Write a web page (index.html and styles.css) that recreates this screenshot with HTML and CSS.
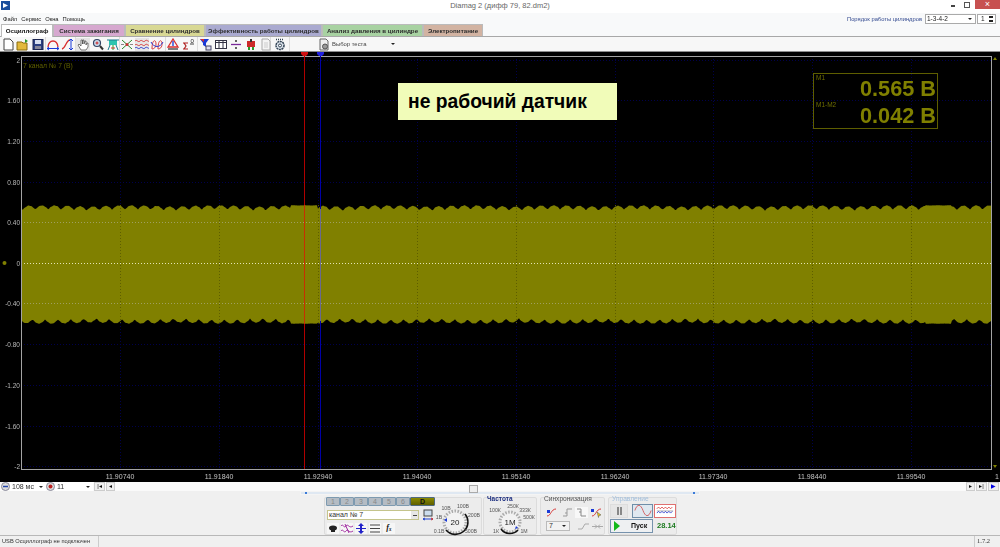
FILE: index.html
```html
<!DOCTYPE html>
<html lang="ru">
<head>
    <meta charset="UTF-8">
    <title>Diamag 2 (дифф 79, 82.dm2)</title>
    <link rel="stylesheet" href="styles.css">
</head>
<body>
    <div class="app">
        <div class="titlebar">
            <svg class="appicon" width="9" height="9" viewBox="0 0 9 9"><rect width="9" height="9" fill="#1c4f9c"/><path d="M2 2l5 2.500-5 2.500z" fill="#fff"/></svg>
            <span class="wintitle">Diamag 2 (дифф 79, 82.dm2)</span>
            <div class="winbtns">
                <span class="winmin"></span>
                <span class="winrestore"></span>
                <span class="winclose">×</span>
            </div>
        </div>

        <div class="menubar">
            <span>Файл</span><span>Сервис</span><span>Окна</span><span>Помощь</span>
            <div class="cyl-order">
                <label>Порядок работы цилиндров</label>
                <div class="combo order-combo">1-3-4-2<i class="drop"></i></div>
                <div class="combo spin">1<i class="updown"></i></div>
            </div>
        </div>

        <div class="tabs">
            <div class="tab active">Осциллограф</div>
            <div class="tab tab-ign">Система зажигания</div>
            <div class="tab tab-cmp">Сравнение цилиндров</div>
            <div class="tab tab-eff">Эффективность работы цилиндров</div>
            <div class="tab tab-prs">Анализ давления в цилиндре</div>
            <div class="tab tab-pwr">Электропитание</div>
        </div>

        <div class="toolbar">
            <div class="toolgroup group-file">
                <svg class="tool" viewBox="0 0 14 13"><path d="M3 1h6l3 3v8H3z" fill="#fff" stroke="#444"/></svg>
                <svg class="tool" viewBox="0 0 14 13"><path d="M1 4h5l1 1h4v7H1z" fill="#e2b93b" stroke="#8a6d10"/><path d="M9 1l3 2-3 2z" fill="#2a9a2a"/></svg>
                <svg class="tool" viewBox="0 0 14 13"><rect x="2" y="1.500" width="10" height="10" fill="#2b3f80" stroke="#1a2450"/><rect x="4" y="2" width="6" height="4" fill="#d8e0f0"/><rect x="4" y="8" width="6" height="3" fill="#889"/></svg>
            </div>
            <div class="toolgroup group-arc">
                <svg class="tool" viewBox="0 0 14 13"><path d="M2 9C3 1 11 1 12 9" fill="none" stroke="#d83030" stroke-width="1.300"/><path d="M1 10.500h12M1 10.500l2-1.500M1 10.500l2 1.500M13 10.500l-2-1.500M13 10.500l-2 1.500" stroke="#1a3ad8" fill="none"/></svg>
                <svg class="tool" viewBox="0 0 14 13"><path d="M1 11C5 10 5 2 9 2" fill="none" stroke="#d83030" stroke-width="1.300"/><path d="M10 1v11M10 1l-2 2M10 1l2 2M10 12l-2-2M10 12l2-2" stroke="#1a3ad8" fill="none"/></svg>
            </div>
            <div class="toolgroup group-view">
                <svg class="tool on" viewBox="0 0 14 13"><path d="M5 12L2 7l1-1 2 2V2h1.500v4L7 2h1v4l1-3h1v4l1-2h1v4l-2 3z" fill="#fff" stroke="#444" stroke-width=".7"/></svg>
                <svg class="tool" viewBox="0 0 14 13"><circle cx="6" cy="5" r="3.500" fill="#cde" stroke="#346"  stroke-width="1.200"/><path d="M9 8l3 3.500" stroke="#333" stroke-width="2"/><path d="M4.500 5h3M6 3.500v3" stroke="#c22"/></svg>
                <svg class="tool" viewBox="0 0 14 13"><rect x="3" y="2" width="8" height="5" fill="#2cc4b0"/><path d="M1 2h12M4 7l-2 5M10 7l2 5" stroke="#1a7a90"/><path d="M7 7v5" stroke="#2a2"/><path d="M5 10h4" stroke="#c33"/></svg>
            </div>
            <div class="toolgroup group-wave">
                <svg class="tool" viewBox="0 0 14 13"><path d="M2 2l10 9M12 2L2 11" stroke="#2c8a2c"/><circle cx="7" cy="6.500" r="1.500" fill="#c33"/><path d="M1 6.500h3M10 6.500h3" stroke="#888"/></svg>
                <svg class="tool on" viewBox="0 0 14 13"><path d="M0 3c2-2 3 2 5 0s3 2 5 0 3 1 4 0M0 7c2-2 3 2 5 0s3 2 5 0 3 1 4 0" fill="none" stroke="#d83a3a"/><path d="M0 10c2-2 3 2 5 0s3 2 5 0 3 1 4 0" fill="none" stroke="#2a3ad0"/></svg>
                <svg class="tool" viewBox="0 0 14 13"><path d="M2 11C2 1 6 1 6 6s-4 5-4 5M8 11C8 1 12 1 12 6s-4 5-4 5" fill="none" stroke="#d83a3a"/><path d="M1 4c3 6 9 6 12 0" fill="none" stroke="#2a3ad0"/></svg>
            </div>
            <div class="toolgroup group-stat">
                <svg class="tool" viewBox="0 0 14 13"><path d="M7 1L2 9h10z" fill="none" stroke="#d83030" stroke-width="1.300"/><path d="M7 3v5" stroke="#1a3ad8" stroke-width="1.300"/><path d="M2 11h10" stroke="#555" stroke-width="1.500"/></svg>
                <svg class="tool" viewBox="0 0 14 13"><path d="M2 5h5M2 11h5M3 5l2 3-2 3" fill="none" stroke="#b02020" stroke-width="1.200"/><path d="M9 6h4" stroke="#444"/><text x="9.500" y="5" class="tool-zero">0</text></svg>
            </div>
            <div class="toolgroup group-misc">
                <svg class="tool" viewBox="0 0 14 13"><path d="M1 1h9L7 5v4L4 7V5z" fill="#1a3ad8"/><path d="M1 1h4v3z" fill="#d83030"/><rect x="7" y="8" width="5" height="4" fill="#dde" stroke="#446"/></svg>
                <svg class="tool" viewBox="0 0 14 13"><rect x="1.500" y="2.500" width="11" height="8" fill="#fff" stroke="#334"/><path d="M1.500 4.500h11M5 2.500v8M9 2.500v8" stroke="#334"/></svg>
                <svg class="tool" viewBox="0 0 14 13"><path d="M2 6.500h10" stroke="#7a2a9a" stroke-width="1.300"/><circle cx="7" cy="3" r="1" fill="#333"/><circle cx="7" cy="10" r="1" fill="#333"/></svg>
                <svg class="tool" viewBox="0 0 14 13"><rect x="3" y="3" width="8" height="6" fill="#cc2a2a"/><path d="M7 1v3" stroke="#333" stroke-width="2"/><path d="M5 9v3M9 9v3" stroke="#2a9a2a" stroke-width="2"/></svg>
                <svg class="tool" viewBox="0 0 14 13"><path d="M3 1h6l2 2v9H3z" fill="#f4f4f4" stroke="#aaa"/><path d="M5 5h4M5 7h4M5 9h4" stroke="#ccc"/></svg>
            </div>
            <div class="toolgroup group-gear">
                <svg class="tool" viewBox="0 0 14 13"><circle cx="7" cy="7.500" r="4" fill="#dfe6ee" stroke="#345" stroke-width="1.500" stroke-dasharray="2 .6"/><circle cx="7" cy="7.500" r="1.500" fill="#fff" stroke="#345"/><path d="M3 1.500h8" stroke="#345" stroke-width="1.500" stroke-dasharray="1 1"/></svg>
            </div>
            <div class="test-select">
                <svg class="test-icon" viewBox="0 0 12 13"><path d="M2 1h6l2 2v9H2z" fill="#eee" stroke="#666"/><circle cx="7" cy="8.500" r="2.500" fill="#999" stroke="#555"/></svg>
                <span>Выбор теста</span>
                <i class="drop"></i>
            </div>
        </div>

        <div class="scope">
            <svg id="plot" class="plot" width="1000" height="431" viewBox="0 51 1000 431"></svg>
            <div class="measure">
                <div class="measure-row"><small>M1</small><b>0.565 В</b></div>
                <div class="measure-row"><small>M1-M2</small><b>0.042 В</b></div>
            </div>
            <div class="note">не рабочий датчик</div>
        </div>

        <div class="transport">
            <svg class="knob-mini" viewBox="0 0 9 9"><circle cx="4.500" cy="4.500" r="4" fill="#ddd" stroke="#889"/><path d="M2 4.500h5" stroke="#24a" stroke-width="1.500"/></svg>
            <div class="tcombo">108 мс<i class="drop"></i></div>
            <svg class="knob-mini" viewBox="0 0 9 9"><circle cx="4.500" cy="4.500" r="4" fill="#ddd" stroke="#889"/><circle cx="4.500" cy="4.500" r="2" fill="#b22"/></svg>
            <div class="tcombo tcombo-b">11<i class="drop"></i></div>
            <span class="tbtn tbtn-wide">|◂</span>
            <span class="tbtn">◂</span>
            <div class="spacer"></div>
            <span class="tbtn">▸</span>
            <span class="tbtn tbtn-wide">▸|</span>
            <span class="tbtn tbtn-wide tbtn-blue">▶</span>
        </div>

        <div class="panel">
            <div class="slider"><span class="slider-dot"></span><span class="slider-knob"></span><span class="slider-dot slider-dot-r"></span></div>

            <div class="group group-channels">
                <div class="channels-left">
                    <div class="chan-row">
                        <span class="chan">1</span><span class="chan">2</span><span class="chan">3</span><span class="chan">4</span><span class="chan">5</span><span class="chan">6</span><span class="chan chan-d">D</span>
                    </div>
                    <div class="chan-combo-row">
                        <div class="chan-combo">канал № 7<i class="chan-minus"></i></div>
                        <svg class="chan-icon" viewBox="0 0 12 12"><rect x="2" y="1" width="8" height="6" fill="#cde" stroke="#444"/><path d="M1 10h10" stroke="#24c"/><path d="M3 9l-2 1 2 1" fill="none" stroke="#24c"/><path d="M9 9l2 1-2 1" fill="none" stroke="#c33"/></svg>
                    </div>
                    <div class="chan-tools">
                        <svg class="ctool" viewBox="0 0 12 11"><ellipse cx="6" cy="5" rx="4" ry="2.500" fill="#222"/><path d="M4 8h4" stroke="#222" stroke-width="2"/></svg>
                        <svg class="ctool" viewBox="0 0 12 11"><path d="M0 3c2-3 3 3 5 0s3 3 7 0M0 8c2-3 3 3 5 0s3 3 7 0" fill="none" stroke="#a02aa0"/><path d="M4 1l4 9" stroke="#a02aa0"/></svg>
                        <svg class="ctool" viewBox="0 0 12 11"><path d="M6 0l3 3H7v5h2l-3 3-3-3h2V3H3z" fill="#2222c8"/><path d="M1 5.500h10" stroke="#2222c8"/></svg>
                        <svg class="ctool" viewBox="0 0 12 11"><path d="M1 2h10M1 5.500h10M1 9h10" stroke="#444"/></svg>
                        <span class="ctool ctool-fx">fₓ</span>
                    </div>
                </div>
                <svg class="dial dial-v" viewBox="0 0 46 40">
                    <circle cx="20" cy="28" r="11" fill="#f2f2f2" stroke="#aaa" stroke-width="3" stroke-dasharray="1.500 1.500"/>
                    <path d="M30 20A12 12 0 0 1 11 36" fill="none" stroke="#111" stroke-width="1.600"/>
                    <path d="M9 26l3-2v4z" fill="#1a3ad8"/>
                    <text x="20" y="31" class="dial-center">20</text>
                    <text x="11" y="16" class="dial-text">10В</text><text x="28" y="14" class="dial-text">100В</text>
                    <text x="4" y="25" class="dial-text">1В</text><text x="39" y="23" class="dial-text">200В</text>
                    <text x="4" y="39" class="dial-text">0.1В</text><text x="36" y="39" class="dial-text">500В</text>
                </svg>
            </div>

            <div class="group group-freq">
                <div class="group-title group-title-blue">Частота</div>
                <svg class="dial dial-f" viewBox="0 0 54 34">
                    <circle cx="26" cy="22" r="10" fill="#f2f2f2" stroke="#aaa" stroke-width="3" stroke-dasharray="1.500 1.500"/>
                    <path d="M17 29A11 11 0 0 0 34 30" fill="none" stroke="#111" stroke-width="1.600"/>
                    <path d="M32 26l2 2-3 1z" fill="#1a3ad8"/>
                    <text x="26" y="25" class="dial-center">1М</text>
                    <text x="29" y="8" class="dial-text">250К</text>
                    <text x="11" y="12" class="dial-text">100К</text><text x="41" y="12" class="dial-text">333К</text>
                    <text x="45" y="19" class="dial-text">500К</text>
                    <text x="12" y="33" class="dial-text">1К</text><text x="40" y="33" class="dial-text">1М</text>
                </svg>
            </div>

            <div class="group group-sync">
                <div class="group-title">Синхронизация</div>
                <div class="sync-row">
                    <svg class="stool" viewBox="0 0 13 11"><path d="M1 9c4 0 4-7 9-7" fill="none" stroke="#d83a3a"/><rect x="1" y="3" width="3" height="3" fill="#1a3ad8"/></svg>
                    <svg class="stool" viewBox="0 0 13 11"><path d="M2 9h4V2h5M6 6l-2 0" fill="none" stroke="#999"/></svg>
                    <svg class="stool stool-on" viewBox="0 0 13 11"><path d="M2 2h4v7h5M6 5H4" fill="none" stroke="#888"/></svg>
                    <svg class="stool" viewBox="0 0 13 11"><path d="M2 9c4 0 4-7 9-7" fill="none" stroke="#d83a3a"/><rect x="1" y="2" width="3" height="3" fill="#1a3ad8"/><path d="M7 5l4 3-2 .5-.5 2z" fill="#f0c820" stroke="#333" stroke-width=".4"/></svg>
                </div>
                <div class="sync-row">
                    <div class="sync-combo">7<i class="drop"></i></div>
                    <svg class="stool" viewBox="0 0 13 11"><path d="M1 8h4l3-5h4" fill="none" stroke="#aaa"/></svg>
                    <svg class="stool" viewBox="0 0 13 11"><path d="M1 5.500h11" stroke="#aaa"/><path d="M4 3.500l2 2-2 2M9 3.500l-2 2 2 2" fill="none" stroke="#aaa"/></svg>
                </div>
            </div>

            <div class="group group-ctrl">
                <div class="group-title group-title-pale">Управление</div>
                <div class="ctrl-row">
                    <span class="cbtn cbtn-pause"><i></i><i></i></span>
                    <span class="cbtn cbtn-sine"><svg viewBox="0 0 21 12"><path d="M1 6C4-3 8-1 10.500 6S17 15 20 6" fill="none" stroke="#d05050" stroke-width="1"/></svg></span>
                    <span class="cbtn cbtn-multi"><svg viewBox="0 0 21 12"><path d="M1 4l2-2 2 2 2-2 2 2 2-2 2 2 2-2 2 2 2-2" fill="none" stroke="#d83a3a"/><path d="M1 6.500h19" stroke="#aaa"/><path d="M1 9l2-2 2 2 2-2 2 2 2-2 2 2 2-2 2 2 2-2" fill="none" stroke="#2a3ad0"/></svg></span>
                </div>
                <div class="ctrl-row">
                    <span class="start"><i class="play"></i><b>Пуск</b></span>
                    <span class="ctrl-time">28.14</span>
                </div>
            </div>
        </div>

        <div class="statusbar">
            <span class="st-left">USB Осциллограф не подключен</span>
            <span class="st-fill"></span>
            <span class="st-ver">1.7.2</span>
        </div>
    </div>
    <script src="plot.js"></script>
</body>
</html>
```

FILE: styles.css
```css
* {
    box-sizing: border-box;
}
body {
    margin: 0;
    background-color: #f0f0f0;
    font-family: "Liberation Sans", Arial, sans-serif;
    font-size: 7px;
    color: #333;
    overflow: hidden;
}
.app {
    width: 1000px;
    height: 547px;
    display: flex;
    flex-direction: column;
}
.app > * {
    flex: none;
}
/* the source is a scaled-down capture, small text is soft */
.menubar, .tabs, .toolbar, .transport, .panel, .statusbar, .measure, .y-label, .x-label, .chan-label {
    filter: blur(0.3px);
}

/* title bar */
.titlebar {
    height: 13px;
    background-color: #fff;
    position: relative;
    display: flex;
    justify-content: center;
}
.appicon {
    position: absolute;
    left: 1px;
    top: 1px;
}
.wintitle {
    font-size: 7.500px;
    line-height: 12px;
    color: #666;
}
.winbtns {
    position: absolute;
    right: 0;
    top: 0;
    display: flex;
    align-items: flex-start;
}
.winmin {
    width: 4px;
    height: 2px;
    margin: 5px 9px 0 0;
    background-color: #444;
}
.winrestore {
    width: 6px;
    height: 6px;
    margin: 2px 5px 0 0;
    border: 1px solid #555;
}
.winclose {
    width: 25px;
    height: 9px;
    background-color: #c75050;
    color: #fff;
    font-size: 9px;
    line-height: 9px;
    text-align: center;
}

/* menu */
.menubar {
    height: 11px;
    background-color: #f8f9fa;
    display: flex;
    align-items: center;
    padding-left: 3px;
    gap: 4px;
    font-size: 5.800px;
    color: #222;
}
.cyl-order {
    margin-left: auto;
    margin-right: 4px;
    display: flex;
    align-items: center;
    gap: 1px;
}
.cyl-order label {
    color: #334a90;
    font-size: 5.800px;
    margin-right: 2px;
}
.combo {
    height: 10px;
    background-color: #fff;
    border: 1px solid #aaa;
    font-size: 6.500px;
    line-height: 8px;
    padding-left: 1px;
    position: relative;
}
.order-combo {
    width: 51px;
}
.spin {
    width: 19px;
    text-align: left;
    padding-left: 3px;
}
.drop {
    position: absolute;
    right: 3px;
    top: 50%;
    margin-top: -1px;
    border-left: 2px solid transparent;
    border-right: 2px solid transparent;
    border-top: 2px solid #222;
}
.updown {
    position: absolute;
    right: 2px;
    top: 1px;
    width: 4px;
    height: 6px;
    background: linear-gradient(#222 0 2px, transparent 2px 4px, #222 4px);
}

/* tabs */
.tabs {
    height: 13px;
    display: flex;
    align-items: flex-end;
    background-color: #f8f9fa;
    border-bottom: 1px solid #a8a8a8;
    padding-left: 1px;
}
.tab {
    height: 12px;
    border: 1px solid #bbb;
    border-bottom: none;
    padding-top: 1px;
    font-size: 6.200px;
    font-weight: bold;
    line-height: 9px;
    white-space: nowrap;
    color: #2e2e2e;
    text-align: center;
}
.tab.active {
    width: 52px;
    height: 13px;
    margin-bottom: -1px;
    background-color: #fff;
    color: #111;
}
.tab-ign {
    width: 72px;
    background-color: #d6a8cf;
}
.tab-cmp {
    width: 80px;
    background-color: #d8d894;
}
.tab-eff {
    width: 117px;
    background-color: #aaaad0;
}
.tab-prs {
    width: 101px;
    background-color: #a8d2a2;
}
.tab-pwr {
    width: 60px;
    background-color: #d2b3a2;
}

/* toolbar */
.toolbar {
    height: 14px;
    display: flex;
    align-items: center;
    background-color: #f7f7f7;
}
.toolgroup {
    height: 14px;
    display: flex;
    align-items: center;
    border-right: 1px solid #ddd;
    gap: 1px;
}
.tool {
    width: 14px;
    height: 13px;
    flex: none;
}
.tool.on {
    background-color: #e6e6e6;
}
.tool-zero {
    font-size: 6px;
    fill: #222;
}
.group-file {
    width: 46px;
    padding-left: 1px;
}
.group-arc {
    width: 30px;
}
.group-view {
    width: 44px;
}
.group-wave {
    width: 46px;
}
.group-stat {
    width: 32px;
}
.group-misc {
    width: 73px;
    padding-left: 1px;
}
.group-gear {
    width: 19px;
    padding-left: 2px;
}
.test-select {
    position: relative;
    margin-left: 28px;
    width: 80px;
    height: 14px;
    display: flex;
    align-items: center;
    gap: 2px;
    font-size: 5.900px;
    color: #444;
}
.test-icon {
    width: 12px;
    height: 13px;
}

/* scope */
.scope {
    height: 431px;
    background-color: #000;
    position: relative;
}
.plot {
    display: block;
}
.plot text {
    font-family: "Liberation Sans", Arial, sans-serif;
}
.y-label {
    font-size: 6.500px;
    fill: #b8b8b8;
    text-anchor: end;
}
.x-label {
    font-size: 7px;
    fill: #c4c4c4;
    text-anchor: middle;
}
.chan-label {
    font-size: 6.800px;
    fill: #5f5f00;
}
.measure {
    position: absolute;
    left: 813px;
    top: 22px;
    width: 125px;
    height: 56px;
    border: 1px solid #5e5e00;
    padding: 0 1px;
}
.measure-row {
    height: 27px;
    position: relative;
    text-align: right;
    color: #808000;
    font-size: 21.700px;
    line-height: 30px;
}
.measure-row small {
    position: absolute;
    left: 1px;
    top: -1px;
    font-size: 6.500px;
    line-height: 10px;
    color: #6e6e00;
}
.note {
    position: absolute;
    left: 398px;
    top: 32px;
    width: 219px;
    height: 37px;
    background-color: #f1fcb9;
    color: #000;
    font-size: 19.300px;
    font-weight: bold;
    line-height: 37px;
    padding-left: 10px;
}

/* row under the plot */
.transport {
    height: 9px;
    background-color: #fafafa;
    display: flex;
    align-items: center;
    padding: 0 1px;
    font-size: 7px;
}
.knob-mini {
    width: 9px;
    height: 9px;
    flex: none;
}
.tcombo {
    position: relative;
    width: 36px;
    height: 9px;
    padding-left: 2px;
    line-height: 9px;
    background-color: #fff;
}
.tcombo-b {
    width: 38px;
}
.tbtn {
    width: 9px;
    height: 9px;
    margin-left: 1px;
    background-color: #eee;
    border: 1px solid #ccc;
    color: #111;
    font-size: 6px;
    line-height: 7px;
    text-align: center;
}
.tbtn-wide {
    width: 11px;
}
.tbtn-blue {
    color: #0000e0;
}
.spacer {
    flex: 1;
}

/* bottom panel */
.panel {
    height: 45px;
    background-color: #f0f0f0;
    border-bottom: 1px solid #b8b8b8;
    position: relative;
    display: flex;
    align-items: flex-end;
    padding: 0 0 0 324px;
}
.slider {
    position: absolute;
    left: 300px;
    top: 0;
    width: 400px;
    height: 4px;
    background-color: #dfe8f2;
    border: 1px solid #f4f4f4;
}
.slider-dot {
    position: absolute;
    left: 4px;
    top: 0;
    width: 2px;
    height: 2px;
    background-color: #3a7ad8;
}
.slider-dot-r {
    left: auto;
    right: 4px;
}
.slider-knob {
    position: absolute;
    left: 168px;
    top: -7px;
    width: 9px;
    height: 8px;
    background-color: #eee;
    border: 1px solid #aaa;
}
.group {
    height: 38px;
    background-color: #ececec;
    border: 1px solid #dcdcdc;
    border-radius: 2px;
    position: relative;
    flex: none;
}
.group-title {
    position: absolute;
    left: 3px;
    top: -4px;
    font-size: 6.600px;
    line-height: 9px;
    white-space: nowrap;
    color: #555;
}
.group-title-blue {
    font-size: 6.500px;
    font-weight: bold;
    color: #1d2f80;
}
.group-title-pale {
    color: #a0bedc;
}
.group-channels {
    width: 158px;
    margin-right: 1px;
    display: flex;
}
.channels-left {
    width: 110px;
    flex: none;
}
.chan-row {
    display: flex;
    height: 9px;
    margin: -1px 0 0 1px;
}
.chan {
    width: 14px;
    height: 9px;
    background-color: #b4bcc4;
    border: 1px solid #7d9ab0;
    border-radius: 1px;
    text-align: center;
    line-height: 7px;
    color: #888;
}
.chan-d {
    width: 25px;
    background: linear-gradient(#8a8a00, #5f5f00);
    border-color: #506a80;
    color: #111;
    font-weight: bold;
}
.chan-combo-row {
    display: flex;
    align-items: center;
    margin: 3px 0 0 2px;
    gap: 3px;
}
.chan-combo {
    position: relative;
    width: 92px;
    height: 10px;
    background-color: #fff;
    border: 1px solid #c4c48c;
    line-height: 8px;
    padding-left: 1px;
    color: #333;
}
.chan-minus {
    position: absolute;
    right: 0;
    top: 0;
    width: 7px;
    height: 8px;
    background: linear-gradient(#444, #444) center / 4px 1px no-repeat #e6e6e6;
}
.chan-icon {
    width: 12px;
    height: 12px;
    flex: none;
}
.chan-tools {
    display: flex;
    align-items: center;
    margin: 2px 0 0 2px;
    gap: 2px;
}
.ctool {
    width: 12px;
    height: 11px;
    background-color: #f6f6f6;
}
.ctool-fx {
    font-family: "Liberation Serif", serif;
    font-style: italic;
    font-weight: bold;
    font-size: 8px;
    line-height: 10px;
    text-align: center;
    color: #111;
}
.dial {
    flex: none;
    overflow: visible;
    font-family: "Liberation Sans", Arial, sans-serif;
}
.dial-v {
    width: 46px;
    height: 40px;
    margin-top: -4px;
}
.dial-text {
    font-size: 5.200px;
    fill: #555;
    text-anchor: middle;
}
.dial-center {
    font-size: 8px;
    fill: #222;
    text-anchor: middle;
}
.group-freq {
    width: 54px;
    margin-right: 3px;
}
.dial-f {
    display: block;
    width: 54px;
    height: 34px;
    margin-top: 2px;
}
.group-sync {
    width: 65px;
    margin-right: 3px;
    padding: 7px 0 0 5px;
}
.sync-row {
    display: flex;
    align-items: center;
    gap: 1.500px;
    height: 14px;
}
.stool {
    width: 13px;
    height: 11px;
    flex: none;
}
.stool-on {
    background-color: #f8f8f8;
}
.sync-combo {
    position: relative;
    width: 24px;
    height: 10px;
    margin-right: 5px;
    background-color: #f2f2f2;
    border: 1px solid #bbb;
    line-height: 8px;
    padding-left: 2px;
}
.group-ctrl {
    width: 69px;
    padding: 5px 0 0 1px;
}
.ctrl-row {
    display: flex;
    align-items: center;
    gap: 1px;
    height: 15px;
}
.cbtn {
    width: 21px;
    height: 14px;
    display: flex;
    align-items: center;
    justify-content: center;
    background-color: #e6e6e6;
    border: 1px solid #ddd;
}
.cbtn-pause {
    width: 18px;
    margin-right: 3px;
    gap: 1px;
}
.cbtn-pause i {
    width: 2px;
    height: 8px;
    background-color: #888;
}
.cbtn-sine {
    background-color: #dfe8f0;
    border-color: #6f8ea8;
}
.cbtn-multi {
    width: 22px;
    background-color: #fff;
    border-color: #e07070;
}
.cbtn svg {
    width: 18px;
    height: 11px;
}
.start {
    width: 43px;
    height: 14px;
    display: flex;
    align-items: center;
    background-color: #eef0f2;
    border: 1px solid #7692ad;
    font-size: 7px;
    color: #111;
}
.start b {
    margin-left: 11px;
}
.play {
    margin-left: 3px;
    border-left: 6px solid #11b818;
    border-top: 5px solid transparent;
    border-bottom: 5px solid transparent;
}
.ctrl-time {
    font-size: 7.500px;
    font-weight: bold;
    color: #1d7a20;
    margin-left: 3px;
}

/* status bar */
.statusbar {
    height: 11px;
    display: flex;
    line-height: 10px;
    font-size: 5.700px;
    white-space: nowrap;
    color: #333;
    background-color: #f0f0f0;
}
.st-left {
    width: 99px;
    padding-left: 2px;
    border-right: 1px solid #ccc;
}
.st-fill {
    flex: 1;
}
.st-ver {
    width: 26px;
    padding-left: 2px;
    border-left: 1px solid #ccc;
    font-family: "Liberation Serif", serif;
    font-size: 6.500px;
}
```

FILE: plot.js
```js
// draws the oscillogram: grid, signal band, cursors and axis labels
var plot = document.getElementById("plot");
var svg = "";

var LEFT = 21, RIGHT = 991, TOP = 56, BOTTOM = 469;
var yTicks = [[60, "2"], [100, "1.60"], [141, "1.20"], [182, "0.80"], [222, "0.40"], [263, "0"],
              [303, "-0.40"], [344, "-0.80"], [385, "-1.20"], [426, "-1.60"], [466, "-2"]];
var xTicks = [[120, "11.90740"], [219, "11.91840"], [318, "11.92940"], [417, "11.94040"], [516, "11.95140"],
              [615, "11.96240"], [713, "11.97340"], [812, "11.98440"], [911, "11.99540"]];

function line(x1, y1, x2, y2, color, dash) {
    return '<line x1="' + x1 + '" y1="' + y1 + '" x2="' + x2 + '" y2="' + y2 + '" stroke="' + color + '"' +
        (dash ? ' stroke-dasharray="' + dash + '"' : '') + ' shape-rendering="crispEdges"/>';
}

// faint grid on black
yTicks.forEach(function(t) {
    svg += line(LEFT, t[0] + 0.5, RIGHT, t[0] + 0.5, "#00004c", "1 2");
});
xTicks.forEach(function(t) {
    svg += line(t[0] + 0.5, TOP, t[0] + 0.5, BOTTOM, "#00004c", "1 2");
});

// edge of the band: scallops plus a little noise, flat where the signal saturates
function edge(x, seed) {
    if ((x > 290 && x < 318) || (x > 925 && x < 952)) {
        return 6 - Math.abs(Math.sin(x * 1.7 + seed)) * 0.6;
    }
    var s = Math.abs(Math.sin(Math.PI * (x + seed) / 12.8));
    return s * 4 + Math.abs(Math.sin(x * 0.037 + seed)) * 1.300 + Math.abs(Math.sin(x * 2.3)) * 0.5;
}
var upper = "", lower = "";
for (var x = LEFT; x <= RIGHT; x++) {
    upper += x + "," + (211 - edge(x, 3)).toFixed(1) + " ";
    lower = x + "," + (318 + edge(x, 6)).toFixed(1) + " " + lower;
}
svg += '<polygon points="' + upper + lower + '" fill="#808000"/>';

// grid over the signal
xTicks.forEach(function(t) {
    svg += line(t[0] + 0.5, 205, t[0] + 0.5, 324, "#5e5e00", "1 2");
});
svg += line(LEFT, 222.5, RIGHT, 222.5, "#a0a060", "1 2");
svg += line(LEFT, 303.5, RIGHT, 303.5, "#a0a060", "1 2");
svg += line(LEFT, 263.5, RIGHT, 263.5, "#e4e4b4", "1 2");

// frame
svg += '<rect x="' + (LEFT + 0.5) + '" y="' + (TOP + 0.5) + '" width="' + (RIGHT - LEFT) + '" height="' + (BOTTOM - TOP) +
    '" fill="none" stroke="#a4a4a4" shape-rendering="crispEdges"/>';
svg += line(0, 51.5, 1000, 51.5, "#8c8c8c");

// cursors
svg += line(304.5, 52, 304.5, 469, "#b00000");
svg += line(304.5, 205, 304.5, 324, "#c83000");
svg += line(320.5, 52, 320.5, 469, "#0000a8");
svg += line(320.5, 209, 320.5, 321, "#6a6a90");
svg += '<path d="M301 52h7v2l-2 2h-3l-2-2z" fill="#d01010"/>';
svg += '<path d="M317 52h7v2l-2 2h-3l-2-2z" fill="#2020e0"/>';

// labels
yTicks.forEach(function(t) {
    svg += '<text class="y-label" x="20" y="' + (t[0] + 2.5) + '">' + t[1] + '</text>';
});
xTicks.forEach(function(t) {
    svg += '<text class="x-label" x="' + t[0] + '" y="479">' + t[1] + '</text>';
});
svg += '<text class="x-label" x="997" y="479">1</text>';
svg += '<text class="chan-label" x="23" y="68">7 канал № 7 (В)</text>';

// markers
svg += '<circle cx="4.500" cy="263" r="2" fill="#808000"/>';
svg += '<path d="M993 60l2-3 2 3z" fill="#808000"/>';
svg += '<path d="M993 465l2 3 2-3z" fill="#808000"/>';

plot.innerHTML = svg;
```
